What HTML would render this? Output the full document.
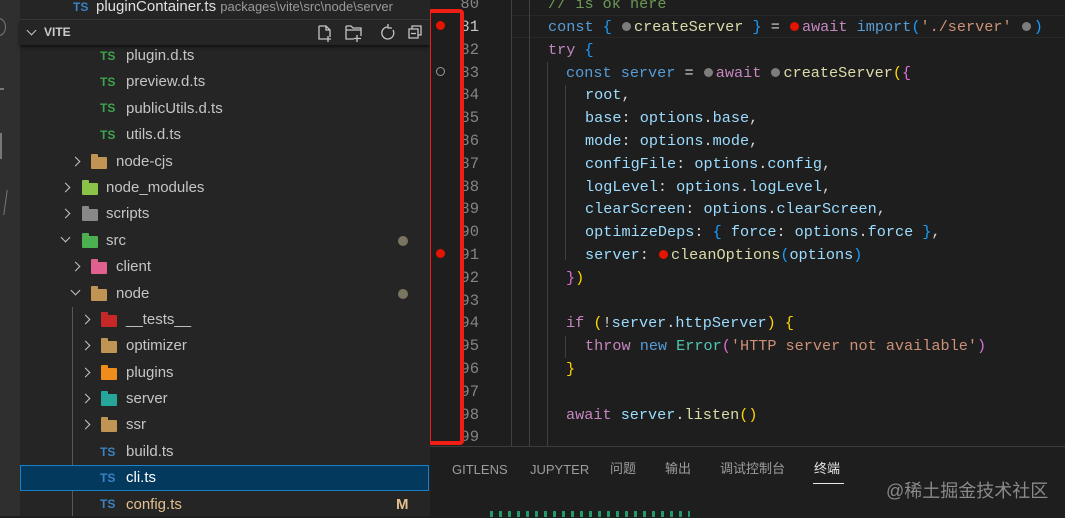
<!DOCTYPE html>
<html><head><meta charset="utf-8"><style>
*{margin:0;padding:0;box-sizing:border-box}
body{width:1065px;height:516px;overflow:hidden;background:#1e1e1e;position:relative;font-family:"Liberation Sans","Noto Sans CJK SC",sans-serif}
.abs{position:absolute}
#act{left:0;top:0;width:20px;height:516px;background:#2f2f2f}
#side{left:20px;top:0;width:410px;height:516px;background:#252526}
.row{position:absolute;height:26px;line-height:26px;font-size:15px;color:#c5c5c5;white-space:nowrap}
.ts{position:absolute;font-size:12px;font-weight:bold;color:#3fa34d;letter-spacing:0px}
.tsb{color:#3b82c4}
.chev{position:absolute;width:7px;height:7px;border-right:1.5px solid #c5c5c5;border-bottom:1.5px solid #c5c5c5}
.cr{transform:rotate(-45deg)}
.cd{transform:rotate(45deg)}
.fold{position:absolute;width:16px;height:12px;border-radius:1px}
.fold:before{content:"";position:absolute;left:0;top:-3px;width:7px;height:4px;background:inherit;border-radius:1px 1px 0 0}
.dot{position:absolute;width:10px;height:10px;border-radius:50%;background:#7a7560}
.code{position:absolute;left:0;font-family:"Liberation Mono",monospace;font-size:15.2px;white-space:pre;color:#9cdcfe;line-height:22px}
.k{color:#569cd6}.f{color:#dcdcaa}.a{color:#c586c0}.s{color:#ce9178}.y{color:#ffd700}.p{color:#da70d6}.b{color:#179fff}.w{color:#d4d4d4}.g{color:#4ec9b0}.c{color:#6a9955}
.bp{display:inline-block;width:9px;height:9px;border-radius:50%;background:#e51400;vertical-align:0px;margin:0 3px 0 1px}
.gp{display:inline-block;width:9px;height:9px;border-radius:50%;background:#7d7d7d;vertical-align:0px;margin:0 3px 0 1px}
.ln{position:absolute;left:0;width:49px;text-align:right;font-family:"Liberation Mono",monospace;font-size:15.5px;color:#858585;line-height:22px}
.guide{position:absolute;width:1px;background:#404040}
.tab{position:absolute;top:459px;font-size:13px;color:#9d9d9d;line-height:18px}
</style></head><body>
<div id="act" class="abs">
 <div class="abs" style="left:-8px;top:18px;width:14px;height:18px;border:1.5px solid #777;border-radius:50%"></div>
 <div class="abs" style="left:0;top:88px;width:4px;height:1.5px;background:#777"></div>
 <div class="abs" style="left:0;top:133px;width:1.5px;height:26px;background:#777"></div>
 <div class="abs" style="left:0;top:190px;width:6px;height:25px;border-right:1.5px solid #777;transform:skewX(-8deg)"></div>
</div>
<div id="side" class="abs">
 <div class="ts tsb" style="left:53px;top:0px">TS</div>
 <div class="row" style="left:76px;top:-6px;color:#e0e0e0">pluginContainer.ts <span style="font-size:13px;color:#9a9a9a">packages\vite\src\node\server</span></div>
 <div class="abs" style="left:0;top:19px;width:410px;height:1px;background:#3a3a3a"></div>
 <div class="abs" style="left:0;top:20px;width:410px;height:25px;background:#252526;box-shadow:0 2px 3px #111"></div>
 <div class="chev cd" style="left:8px;top:27px;border-color:#c5c5c5"></div>
 <div class="row" style="left:24px;top:20px;height:25px;line-height:25px;font-size:12px;font-weight:bold;color:#cccccc">VITE</div>
 <svg class="abs" style="left:296px;top:22px" width="110" height="22" viewBox="0 0 110 22" fill="none" stroke="#c5c5c5" stroke-width="1.3">
  <path d="M3 4h7l4 4v7M3 4v13h7M14 8h-4v-4M12 14v6M9 17h6"/>
  <path d="M30 4h5l2 2h8v8M30 4v13h8M30 8h15M41 13v7M38 16.5h7"/>
  <path d="M72 5a6 6 0 1 0 5 3M72 2v4h4" />
  <path d="M93 7h9v9h-9zM96 7v-3h9v9h-3M95 11.5h5"/>
 </svg>
 <div class="ts" style="left:80px;top:49px">TS</div><div class="row" style="left:106px;top:43px">plugin.d.ts</div>
 <div class="ts" style="left:80px;top:75px">TS</div><div class="row" style="left:106px;top:69px">preview.d.ts</div>
 <div class="ts" style="left:80px;top:101px">TS</div><div class="row" style="left:106px;top:96px">publicUtils.d.ts</div>
 <div class="ts" style="left:80px;top:128px">TS</div><div class="row" style="left:106px;top:122px">utils.d.ts</div>
 <div class="chev cr" style="left:52px;top:158px"></div><div class="fold" style="left:71px;top:157px;background:#c09553"></div><div class="row" style="left:96px;top:149px">node-cjs</div>
 <div class="chev cr" style="left:42px;top:184px"></div><div class="fold" style="left:62px;top:183px;background:#8bc34a"></div><div class="row" style="left:86px;top:175px">node_modules</div>
 <div class="chev cr" style="left:42px;top:210px"></div><div class="fold" style="left:62px;top:209px;background:#888"></div><div class="row" style="left:86px;top:201px">scripts</div>
 <div class="chev cd" style="left:42px;top:234px"></div><div class="fold" style="left:62px;top:236px;background:#4caf50"></div><div class="row" style="left:86px;top:228px">src</div><div class="dot" style="left:378px;top:236px"></div>
 <div class="chev cr" style="left:52px;top:263px"></div><div class="fold" style="left:71px;top:262px;background:#e06090"></div><div class="row" style="left:96px;top:254px">client</div>
 <div class="chev cd" style="left:52px;top:287px"></div><div class="fold" style="left:71px;top:289px;background:#c09553"></div><div class="row" style="left:96px;top:281px">node</div><div class="dot" style="left:378px;top:289px"></div>
 <div class="abs" style="left:52px;top:307px;width:1px;height:209px;background:#585858"></div>
 <div class="chev cr" style="left:62px;top:316px"></div><div class="fold" style="left:81px;top:315px;background:#c62828"></div><div class="row" style="left:106px;top:307px">__tests__</div>
 <div class="chev cr" style="left:62px;top:342px"></div><div class="fold" style="left:81px;top:341px;background:#c09553"></div><div class="row" style="left:106px;top:333px">optimizer</div>
 <div class="chev cr" style="left:62px;top:369px"></div><div class="fold" style="left:81px;top:368px;background:#ef8c1a"></div><div class="row" style="left:106px;top:360px">plugins</div>
 <div class="chev cr" style="left:62px;top:395px"></div><div class="fold" style="left:81px;top:394px;background:#26a69a"></div><div class="row" style="left:106px;top:386px">server</div>
 <div class="chev cr" style="left:62px;top:421px"></div><div class="fold" style="left:81px;top:420px;background:#c09553"></div><div class="row" style="left:106px;top:412px">ssr</div>
 <div class="ts tsb" style="left:80px;top:445px">TS</div><div class="row" style="left:106px;top:439px">build.ts</div>
 <div class="abs" style="left:0;top:465px;width:409px;height:26px;background:#04395e;border:1px solid #1a7fc9"></div>
 <div class="ts tsb" style="left:80px;top:471px">TS</div><div class="row" style="left:106px;top:465px;color:#fff">cli.ts</div>
 <div class="ts tsb" style="left:80px;top:497px">TS</div><div class="row" style="left:106px;top:492px;color:#e2c08d">config.ts</div><div class="row" style="left:376px;top:492px;color:#e2c08d;font-weight:bold">M</div>
</div>
<div class="abs" style="left:430px;top:0;width:635px;height:446px;background:#1e1e1e;overflow:hidden">
 <div class="abs" style="left:80px;top:15px;width:555px;height:23px;border-top:1px solid #282828;border-bottom:1px solid #282828"></div>
 <div class="guide" style="left:81px;top:0;height:446px"></div>
 <div class="guide" style="left:99px;top:0;height:446px"></div>
 <div class="guide" style="left:117px;top:62px;height:384px"></div>
 <div class="guide" style="left:135px;top:85px;height:175px"></div>
 <div class="guide" style="left:135px;top:336px;height:22px"></div>
 <div class="abs" style="left:0;top:2px;width:60px;height:446px">
 <div class="ln" style="top:-9px">80</div><div class="ln" style="top:14px;color:#c6c6c6">81</div><div class="ln" style="top:37px">82</div><div class="ln" style="top:60px">83</div><div class="ln" style="top:82px">84</div><div class="ln" style="top:105px">85</div><div class="ln" style="top:128px">86</div><div class="ln" style="top:151px">87</div><div class="ln" style="top:174px">88</div><div class="ln" style="top:196px">89</div><div class="ln" style="top:219px">90</div><div class="ln" style="top:242px">91</div><div class="ln" style="top:265px">92</div><div class="ln" style="top:288px">93</div><div class="ln" style="top:310px">94</div><div class="ln" style="top:333px">95</div><div class="ln" style="top:356px">96</div><div class="ln" style="top:379px">97</div><div class="ln" style="top:402px">98</div><div class="ln" style="top:424px">99</div>
 </div>
 <div class="abs" style="left:6px;top:21px;width:9px;height:9px;border-radius:50%;background:#e51400"></div>
 <div class="abs" style="left:6px;top:67px;width:9px;height:9px;border-radius:50%;border:1.5px solid #999"></div>
 <div class="abs" style="left:6px;top:249px;width:9px;height:9px;border-radius:50%;background:#e51400"></div>
 <div class="abs" style="left:-3px;top:9px;width:37px;height:436px;border:4px solid #f01e14;border-radius:4px"></div>
 <div class="code c" style="left:118px;top:-7px">// is ok here</div>
 <div class="code" style="left:118px;top:16px"><span class="k">const</span> <span class="b">{</span> <span class="gp"></span><span class="f">createServer</span> <span class="b">}</span> <span class="w">=</span> <span class="bp"></span><span class="a">await</span> <span class="k">import</span><span class="b">(</span><span class="s">'./server'</span> <span class="gp"></span><span class="b">)</span></div>
 <div class="code" style="left:118px;top:39px"><span class="a">try</span> <span class="b">{</span></div>
 <div class="code" style="left:136px;top:62px"><span class="k">const</span> <span class="k">server</span> <span class="w">=</span> <span class="gp"></span><span class="a">await</span> <span class="gp"></span><span class="f">createServer</span><span class="y">(</span><span class="p">{</span></div>
 <div class="code" style="left:155px;top:84px">root<span class="w">,</span></div>
 <div class="code" style="left:155px;top:107px">base<span class="w">:</span> options<span class="w">.</span>base<span class="w">,</span></div>
 <div class="code" style="left:155px;top:130px">mode<span class="w">:</span> options<span class="w">.</span>mode<span class="w">,</span></div>
 <div class="code" style="left:155px;top:153px">configFile<span class="w">:</span> options<span class="w">.</span>config<span class="w">,</span></div>
 <div class="code" style="left:155px;top:176px">logLevel<span class="w">:</span> options<span class="w">.</span>logLevel<span class="w">,</span></div>
 <div class="code" style="left:155px;top:198px">clearScreen<span class="w">:</span> options<span class="w">.</span>clearScreen<span class="w">,</span></div>
 <div class="code" style="left:155px;top:221px">optimizeDeps<span class="w">:</span> <span class="b">{</span> force<span class="w">:</span> options<span class="w">.</span>force <span class="b">}</span><span class="w">,</span></div>
 <div class="code" style="left:155px;top:244px">server<span class="w">:</span> <span class="bp"></span><span class="f">cleanOptions</span><span class="b">(</span>options<span class="b">)</span></div>
 <div class="code" style="left:136px;top:267px"><span class="p">}</span><span class="y">)</span></div>
 <div class="code" style="left:136px;top:312px"><span class="a">if</span> <span class="y">(</span><span class="w">!</span>server<span class="w">.</span>httpServer<span class="y">)</span> <span class="y">{</span></div>
 <div class="code" style="left:155px;top:335px"><span class="a">throw</span> <span class="k">new</span> <span class="g">Error</span><span class="p">(</span><span class="s">'HTTP server not available'</span><span class="p">)</span></div>
 <div class="code" style="left:136px;top:358px"><span class="y">}</span></div>
 <div class="code" style="left:136px;top:404px"><span class="a">await</span> server<span class="w">.</span><span class="f">listen</span><span class="y">()</span></div>
</div>
<div class="abs" style="left:430px;top:446px;width:635px;height:70px;background:#1e1e1e;border-top:1px solid #3c3c3c">
 <div class="tab" style="left:22px;top:14px">GITLENS</div>
 <div class="tab" style="left:100px;top:14px">JUPYTER</div>
 <div class="tab" style="left:180px;top:13px">问题</div>
 <div class="tab" style="left:235px;top:13px">输出</div>
 <div class="tab" style="left:290px;top:13px">调试控制台</div>
 <div class="tab" style="left:384px;top:13px;color:#e7e7e7">终端</div>
 <div class="abs" style="left:383px;top:36px;width:31px;height:1px;background:#e7e7e7"></div>
 <div class="abs" style="left:456px;top:30px;font-size:18px;color:#8a8a8a">@稀土掘金技术社区</div>
 <div class="abs" style="left:60px;top:64px;width:200px;height:6px;background:repeating-linear-gradient(90deg,#23d18b 0 3px,transparent 3px 9px);opacity:.7"></div>
</div>
</body></html>
